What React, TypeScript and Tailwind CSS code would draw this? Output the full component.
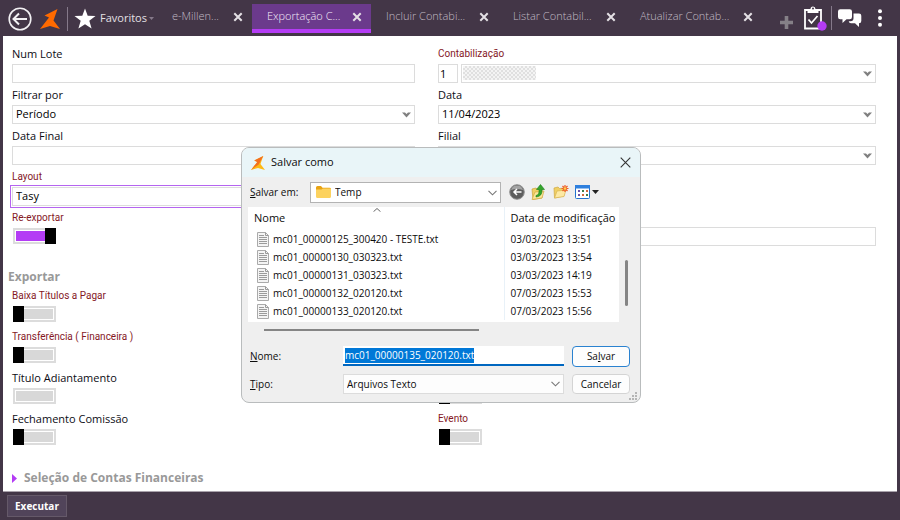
import { useState } from "react";

interface Tab {
  title: string;
  width: string;
}

const tabs: Tab[] = [
  { title: "e-Millen...", width: "w-[95px]" },
  { title: "Exportação C...", width: "w-[119px]" },
  { title: "Incluir Contabi...", width: "w-[127px]" },
  { title: "Listar Contabil...", width: "w-[127px]" },
  { title: "Atualizar Contab...", width: "w-[137px]" },
];

const files = [
  { name: "mc01_00000125_300420 - TESTE.txt", date: "03/03/2023 13:51" },
  { name: "mc01_00000130_030323.txt", date: "03/03/2023 13:54" },
  { name: "mc01_00000131_030323.txt", date: "03/03/2023 14:19" },
  { name: "mc01_00000132_020120.txt", date: "07/03/2023 15:53" },
  { name: "mc01_00000133_020120.txt", date: "07/03/2023 15:56" },
];

function Chevron({ className = "" }: { className?: string }) {
  return (
    <svg className={`pointer-events-none ${className}`} width="9" height="6" viewBox="0 0 9 6">
      <path d="M0 0.5h3L4.5 2 6 0.5h3L4.5 5.5z" fill="#808080" />
    </svg>
  );
}

function ThinChevron({ className = "" }: { className?: string }) {
  return (
    <svg className={`pointer-events-none ${className}`} width="9" height="6" viewBox="0 0 9 6">
      <path d="M0.5 0.8l4 4 4-4" fill="none" stroke="#777" strokeWidth="1.1" />
    </svg>
  );
}

function CloseIcon() {
  return (
    <svg width="10" height="10" viewBox="0 0 10 10">
      <path d="M1.3 1.3l7.4 7.4M8.7 1.3L1.3 8.7" stroke="#e4e0e5" strokeWidth="2" />
    </svg>
  );
}

function Logo({ size, gold = false }: { size: number; gold?: boolean }) {
  return (
    <svg width={size} height={size} viewBox="0 0 20 20">
      <path d="M17.5 0L4.500 6.500 9 8.500 0 20l10-3 10 3-6.500-8.500z" fill={gold ? "#fdb913" : "#ff6a00"} />
      {gold && <path d="M17.500 0L4.500 6.500 9 8.500 0 20l11-8z" fill="#f36f21" />}
    </svg>
  );
}

function Row({
  id,
  label,
  red = false,
  children,
}: {
  id: string;
  label: string;
  red?: boolean;
  children: React.ReactNode;
}) {
  return (
    <div className="h-[41px]">
      <label
        htmlFor={id}
        className={`block h-[18px] leading-4 whitespace-nowrap ${
          red ? "font-['Roboto',sans-serif] text-[10px] text-[#85181f]" : "text-[11px] text-[#0c0c14]"
        }`}
      >
        {label}
      </label>
      {children}
    </div>
  );
}

function TextField({ id, defaultValue = "" }: { id: string; defaultValue?: string }) {
  return (
    <input
      id={id}
      type="text"
      defaultValue={defaultValue}
      className="block h-[19px] w-full border border-[#dcdcdc] bg-white px-1 text-[11px] outline-none"
    />
  );
}

function SelectField({
  id,
  value = "",
  focused = false,
  children,
}: {
  id: string;
  value?: string;
  focused?: boolean;
  children?: React.ReactNode;
}) {
  return (
    <div className="relative flex-1">
      <select
        id={id}
        className={`block h-[19px] w-full appearance-none border border-[#dcdcdc] bg-white px-[3px] text-[11px] text-black ${
          focused ? "outline outline-offset-1 outline-[#b565f0]" : "outline-none"
        }`}
      >
        <option>{value}</option>
      </select>
      {children}
      <Chevron className="absolute top-[7px] right-1" />
    </div>
  );
}

function Toggle({ id, on = false, unset = false }: { id: string; on?: boolean; unset?: boolean }) {
  const [checked, setChecked] = useState(on);

  return (
    <input
      id={id}
      type="checkbox"
      checked={checked}
      onChange={(e) => setChecked(e.target.checked)}
      className={`relative ml-px block h-4 w-[43px] appearance-none border-2 border-[#dcdcdc] bg-[#d8d8d8] bg-clip-content p-px before:absolute before:-top-0.5 before:-left-0.5 before:h-4 before:w-[11px] before:bg-black checked:bg-[#b43cf5] checked:before:right-[-2px] checked:before:left-auto ${
        unset ? "before:hidden" : ""
      }`}
    />
  );
}

function Header() {
  return (
    <header className="flex h-9 shrink-0 items-start bg-[#433647] text-[#e4e0e5]">
      <div className="flex h-[37px] items-center pl-2">
        <button aria-label="Voltar">
          <svg width="24" height="24" viewBox="0 0 24 24" fill="none" stroke="#f2f0f3">
            <circle cx="12" cy="12" r="10.8" strokeWidth="1.6" />
            <path d="M19 12H6M11 6.5L5.5 12l5.5 5.5" strokeWidth="2" />
          </svg>
        </button>
        <span className="ml-2">
          <Logo size={20} />
        </span>
        <span className="ml-[7px] h-6 w-px bg-[#85798a]" />
        <button className="ml-1.5 flex items-center text-[11px]">
          <svg width="22" height="22" viewBox="0 0 22 22">
            <path d="M11 0.5l2.7 7.3 7.8.2-6.2 4.8 2.3 7.8L11 16.2l-6.6 4.4 2.3-7.8L0.5 8l7.8-.2z" fill="#fff" />
          </svg>
          <span className="ml-1">Favoritos</span>
          <svg className="ml-0.5" width="5" height="3" viewBox="0 0 5 3">
            <path d="M0 0h5L2.5 3z" fill="#85798a" />
          </svg>
        </button>
      </div>

      <nav className="ml-[3px] flex pt-1">
        {tabs.map((tab, i) => (
          <div
            key={tab.title}
            className={`flex h-[29px] items-center justify-between border-b-4 pr-[9px] pl-[15px] text-[11px] whitespace-nowrap ${tab.width} ${
              i === 1 ? "border-[#b43cf5] bg-[#6b3a8c] text-[#f5eef9]" : "border-transparent text-[#c2bbc5]"
            }`}
          >
            <a href="#" className="font-light">
              {tab.title}
            </a>
            <button aria-label={`Fechar ${tab.title}`}>
              <CloseIcon />
            </button>
          </div>
        ))}
      </nav>

      <div className="ml-auto flex h-9 items-center pr-[18px]">
        <button aria-label="Nova aba" className="mt-2">
          <svg width="13" height="13" viewBox="0 0 13 13">
            <path d="M4.7 0h3.6v4.7H13v3.6H8.3V13H4.7V8.3H0V4.7h4.7z" fill="#858087" />
          </svg>
        </button>
        <button aria-label="Tarefas" className="ml-[11px]">
          <svg width="23" height="26" viewBox="0 0 23 26">
            <path d="M1 5h16v18.5H1z" fill="none" stroke="#fff" strokeWidth="1.8" />
            <path d="M3.5 4h3a2.5 2.5 0 015 0h3v4h-11z" fill="#fff" />
            <circle cx="9" cy="3.6" r="1" fill="#433647" />
            <path d="M4.5 14.5l3 3.5 6-7" fill="none" stroke="#fff" strokeWidth="1.7" />
            <circle cx="18" cy="21" r="4.7" fill="#b43cf5" />
          </svg>
        </button>
        <span className="ml-1 h-6 w-px bg-[#85798a]" />
        <button aria-label="Mensagens" className="ml-1.5">
          <svg width="24" height="18" viewBox="0 0 24 18" fill="#fff">
            <path d="M15.5 4.5H21q2.3 0 2.3 2.3V12q0 2.3-2.3 2.3V18l-4-3.7h-4q-2 0-2.3-2h1.8q3 0 3-3z" />
            <path d="M2.3 0.3h9.4Q14 .3 14 2.600V8q0 2.300-2.300 2.300H8.500L4.500 14v-3.700H2.300Q0 10.300 0 8V2.600Q0 .3 2.300 .3z" />
          </svg>
        </button>
        <button aria-label="Mais opções" className="ml-4">
          <svg width="4" height="18" viewBox="0 0 4 18" fill="#fff">
            <circle cx="2" cy="2.200" r="2" />
            <circle cx="2" cy="9" r="2" />
            <circle cx="2" cy="15.800" r="2" />
          </svg>
        </button>
      </div>
    </header>
  );
}

function FileIcon() {
  return (
    <svg width="12" height="15" viewBox="0 0 12 15" className="shrink-0">
      <path d="M0.500 0.500h8l3 3v11h-11z" fill="#f4f4f4" stroke="#aaa" />
      <path d="M8.500 0.500v3h3" fill="none" stroke="#9a9a9a" />
      <path d="M2 3.500h5M2 5.500h8M2 7.500h8M2 9.500h8M2 11.500h8" stroke="#9b9b9b" />
    </svg>
  );
}

function DialogTools() {
  return (
    <div className="ml-2 flex items-center">
      <button aria-label="Voltar pasta">
        <svg width="16" height="16" viewBox="0 0 16 16">
          <circle cx="8" cy="8" r="7.300" fill="#5e5e5e" stroke="#929292" />
          <path d="M2 6a6.300 6.300 0 0112 0q-6-2-12 0z" fill="#a4a4a4" />
          <path d="M12.500 8H5M8 5L5 8l3 3" fill="none" stroke="#fff" strokeWidth="1.500" />
        </svg>
      </button>
      <button aria-label="Subir um nível" className="ml-1.5">
        <svg width="14" height="16" viewBox="0 0 14 16">
          <path d="M1 5l4-1 1 1 5-.5V14l-9 1.500z" fill="#f0cf63" stroke="#c9a23a" strokeWidth=".7" />
          <path d="M1 15.500L4 8l9-1-2 7z" fill="#fbe69a" stroke="#d3ab3e" strokeWidth=".7" />
          <path d="M5 11.500q3.500-.5 3-6H5.500L9.500 0.500l4 5H11q.5 7-6 7.500z" fill="#35a52c" stroke="#1b7f19" strokeWidth=".6" />
        </svg>
      </button>
      <button aria-label="Nova pasta" className="ml-2">
        <svg width="16" height="14" viewBox="0 0 16 14">
          <path d="M1 3l4-1 1.500 1.500L11 3v8L1.500 13z" fill="#f0cf63" stroke="#cfa844" strokeWidth=".7" />
          <path d="M1.500 13L4 6l9-1-2 6.500z" fill="#fde9a3" stroke="#d9b552" strokeWidth=".7" />
          <path d="M12 0v7M8.500 3.500h7M9.500 1l5 5M14.500 1l-5 5" stroke="#ee5a24" strokeWidth="1.200" />
          <circle cx="12" cy="3.500" r="1.300" fill="#ffd34d" />
        </svg>
      </button>
      <button aria-label="Modo de exibição" className="ml-1.5 flex items-center">
        <svg width="24" height="14" viewBox="0 0 24 14">
          <rect x=".5" y=".5" width="14" height="13" rx="1" fill="#fff" stroke="#2272cf" />
          <path d="M0 0h15v3.500H0z" fill="#2f80de" />
          <path d="M3 6h2M3 10h2" stroke="#6b55a8" strokeWidth="2" />
          <path d="M7 6h2M11 10h2" stroke="#3c7d4c" strokeWidth="2" />
          <path d="M11 6h2M7 10h2" stroke="#d1683d" strokeWidth="2" />
          <path d="M17 5h7l-3.500 4z" fill="#222" />
        </svg>
      </button>
    </div>
  );
}

function SaveDialog() {
  const [fileName, setFileName] = useState("mc01_00000135_020120.txt");

  return (
    <section
      role="dialog"
      aria-label="Salvar como"
      className="absolute top-[147px] left-[241px] w-[400px] overflow-hidden rounded-lg border border-[#b9bcbd] bg-[#efefef] pb-2 text-[10px] text-[#0c0c0c]"
    >
      <div className="flex h-[29px] items-center bg-[#e9f5f8] pr-[9px] pl-[9px] text-[11px]">
        <Logo size={14} gold />
        <h2 className="ml-1.5">Salvar como</h2>
        <button aria-label="Fechar" className="ml-auto">
          <svg width="11" height="11" viewBox="0 0 11 11">
            <path d="M0.700 0.700l9.600 9.600M10.300 0.700L0.700 10.300" stroke="#333" strokeWidth="1.100" />
          </svg>
        </button>
      </div>

      <div className="flex h-[30px] items-center pl-2">
        <label htmlFor="folder" className="w-[60px]">
          <u>S</u>alvar em:
        </label>
        <div className="relative">
          <select
            id="folder"
            className="block h-[21px] w-[191px] appearance-none border border-[#b3b3b3] bg-white pl-6 outline-none"
          >
            <option>Temp</option>
          </select>
          <svg className="pointer-events-none absolute top-1 left-1.5" width="15" height="12" viewBox="0 0 15 12">
            <path d="M0 1.500Q0 0 1.500 0H5l1.500 1.700h7Q15 1.700 15 3v4H0z" fill="#e8a313" />
            <path d="M0 3.500h5.500L7 2.500h8v8q0 1.500-1.500 1.500h-12Q0 12 0 10.500z" fill="#fcd25f" />
          </svg>
          <ThinChevron className="absolute top-2 right-1" />
        </div>
        <DialogTools />
      </div>

      <div className="flex pr-3 pl-1.5">
        <div className="relative h-[115px] flex-1 bg-white">
          <svg className="absolute top-px left-[125px]" width="8" height="4" viewBox="0 0 8 4">
            <path d="M0.500 3.700L4 0.500l3.500 3.200" fill="none" stroke="#666" />
          </svg>
          <table className="w-full table-fixed border-collapse whitespace-nowrap">
            <thead className="text-[11px]">
              <tr className="h-[23px]">
                <th className="border-r border-[#e8f1f8] pl-1.5 text-left font-normal">Nome</th>
                <th className="w-[115px] pl-1.5 text-left font-normal">Data de modificação</th>
              </tr>
            </thead>
            <tbody>
              {files.map((file) => (
                <tr key={file.name} className="h-[18px]">
                  <td className="border-r border-[#e8f1f8] pl-[9px] leading-[18px]">
                    <span className="flex items-center gap-1">
                      <FileIcon />
                      {file.name}
                    </span>
                  </td>
                  <td className="pl-1.5 leading-[18px]">{file.date}</td>
                </tr>
              ))}
            </tbody>
          </table>
        </div>
        <div className="flex w-[9px] items-end justify-end pb-4">
          <span className="h-[46px] w-[3px] rounded-full bg-[#858585]" />
        </div>
      </div>

      <div className="mt-[7px] ml-[22px] h-0.5 w-[215px] bg-[#858585]" />

      <div className="mt-[15px] grid grid-cols-[93px_221px_58px] gap-y-[7px] pl-2">
        <label htmlFor="file-name" className="leading-5">
          <u>N</u>ome:
        </label>
        <div className="h-5 border-b-2 border-[#0067c0] bg-white px-0.5 pt-0.5">
          <input
            id="file-name"
            type="text"
            value={fileName}
            onChange={(e) => setFileName(e.target.value)}
            className="block field-sizing-content h-[15px] bg-[#0078d7] text-white outline-none"
          />
        </div>
        <button className="ml-2 h-[21px] w-[58px] rounded-[4px] border border-[#2a82d0] bg-[#fdfdfd]">
          Sa<u>l</u>var
        </button>
        <label htmlFor="file-type" className="leading-5">
          <u>T</u>ipo:
        </label>
        <div className="relative">
          <select
            id="file-type"
            className="block h-5 w-full appearance-none border border-[#dcdcdc] bg-[#fdfdfd] pl-[3px] outline-none"
          >
            <option>Arquivos Texto</option>
          </select>
          <ThinChevron className="absolute top-[7px] right-1" />
        </div>
        <button className="ml-2 h-5 w-[58px] rounded-[4px] border border-[#d4d4d4] bg-[#fdfdfd]">Cancelar</button>
      </div>

      <svg className="absolute right-[3px] bottom-0.5" width="8" height="8" viewBox="0 0 8 8" fill="#b5b5b5">
        <path d="M6 0h2v2H6zM3 3h2v2H3zM6 3h2v2H6zM0 6h2v2H0zM3 6h2v2H3zM6 6h2v2H6z" />
      </svg>
    </section>
  );
}

export default function App() {
  return (
    <div className="relative flex min-h-screen flex-col bg-[#433647] font-['Open_Sans',sans-serif]">
      <Header />

      <main className="mx-[3px] flex-1 border-b border-[#a9a2ab] bg-white pt-2.5 pr-[21px] pl-[9px]">
        <div className="grid grid-cols-[403fr_438fr] gap-x-[23px]">
          <div>
            <Row id="lote" label="Num Lote">
              <TextField id="lote" />
            </Row>
            <Row id="filtro" label="Filtrar por">
              <SelectField id="filtro" value="Período" />
            </Row>
            <Row id="data-final" label="Data Final">
              <TextField id="data-final" />
            </Row>
            <Row id="layout" label="Layout" red>
              <SelectField id="layout" value="Tasy" focused />
            </Row>
            <Row id="reexportar" label="Re-exportar" red>
              <Toggle id="reexportar" on />
            </Row>
          </div>
          <div>
            <Row id="contabilizacao" label="Contabilização" red>
              <div className="flex gap-[3px]">
                <input
                  type="text"
                  aria-label="Código"
                  defaultValue="1"
                  className="h-[19px] w-5 border border-[#dcdcdc] px-px text-[11px] outline-none"
                />
                <SelectField id="contabilizacao">
                  <span className="pointer-events-none absolute top-0.5 left-0.5 h-[14px] w-[73px] bg-[repeating-conic-gradient(#e0e0e0_0_25%,#f4f4f4_0_50%)] bg-[length:4px_4px]" />
                </SelectField>
              </div>
            </Row>
            <Row id="data" label="Data">
              <SelectField id="data" value="11/04/2023" />
            </Row>
            <Row id="filial" label="Filial">
              <SelectField id="filial" />
            </Row>
            <div className="h-[58px]" />
            <input
              type="text"
              aria-label="Arquivo"
              className="block h-[19px] w-full border border-[#dcdcdc] px-1 text-[11px] outline-none"
            />
          </div>
        </div>

        <h2 className="-ml-1 pt-4 text-xs leading-5 font-bold text-[#999]">Exportar</h2>
        <div className="mt-px grid grid-cols-[403fr_438fr] gap-x-[23px]">
          <div>
            <Row id="baixa" label="Baixa Títulos a Pagar" red>
              <Toggle id="baixa" />
            </Row>
            <Row id="transferencia" label="Transferência ( Financeira )" red>
              <Toggle id="transferencia" />
            </Row>
            <Row id="adiantamento" label="Título Adiantamento">
              <Toggle id="adiantamento" unset />
            </Row>
            <Row id="comissao" label="Fechamento Comissão">
              <Toggle id="comissao" />
            </Row>
          </div>
          <div className="flex flex-col justify-end">
            <div className="h-[23px]">
              <Toggle id="oculto" />
            </div>
            <Row id="evento" label="Evento" red>
              <Toggle id="evento" />
            </Row>
          </div>
        </div>

        <h2 className="mt-4 flex items-center text-xs leading-5 font-bold text-[#999]">
          <svg className="mr-[7px]" width="5" height="9" viewBox="0 0 5 9">
            <path d="M0 0l5 4.500L0 9z" fill="#b43cf5" />
          </svg>
          Seleção de Contas Financeiras
        </h2>
      </main>

      <footer className="flex h-7 shrink-0 items-center pl-[7px]">
        <button className="h-[22px] border border-[#655969] bg-[#51445a] px-[7px] text-[10px] font-bold text-white">
          Executar
        </button>
      </footer>

      <SaveDialog />
    </div>
  );
}
